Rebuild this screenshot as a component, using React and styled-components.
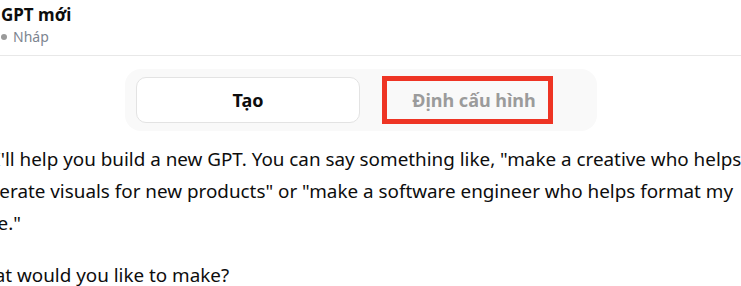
import React from "react";
import styled, { createGlobalStyle } from "styled-components";

const GlobalStyle = createGlobalStyle`
  body {
    margin: 0;
    background: #ffffff;
    font-family: "Noto Sans", "Open Sans", sans-serif;
    color: #0d0d0d;
    overflow: hidden;
  }
`;

const Page = styled.div`
  width: 741px;
  height: 286px;
  overflow: hidden;
`;

const Header = styled.header`
  height: 56px;
  padding: 3px 0 0 1px;
  box-sizing: border-box;
  border-bottom: 1px solid #e8e8e8;
`;

const Title = styled.h1`
  margin: 0;
  font-size: 17px;
  font-weight: 700;
  line-height: 24px;
  color: #0d0d0d;
`;

const Status = styled.div`
  display: flex;
  align-items: center;
  gap: 6px;
  font-size: 14px;
  line-height: 20px;
  color: #7d8590;
`;

const Dot = styled.span`
  width: 6px;
  height: 6px;
  border-radius: 50%;
  background: #9a9a9a;
`;

const TabsBar = styled.div`
  margin: 13px 0 0 125px;
  width: 472px;
  height: 62px;
  box-sizing: border-box;
  padding: 8px 11px;
  background: #f9f9f9;
  border-radius: 16px;
  display: grid;
  grid-template-columns: 1fr 1fr;
  gap: 2px;
`;

const Tab = styled.div`
  position: relative;
  display: flex;
  align-items: center;
  justify-content: center;
  border-radius: 10px;
  font-size: 18px;
  font-weight: 700;
  background: ${(p) => (p.$active ? "#ffffff" : "transparent")};
  border: 1px solid ${(p) => (p.$active ? "#e3e3e3" : "transparent")};
  color: ${(p) => (p.$active ? "#0d0d0d" : "#9b9b9b")};
`;

const Highlight = styled.span`
  position: absolute;
  left: 19px;
  top: -2px;
  width: 171px;
  height: 48px;
  box-sizing: border-box;
  border: 5px solid #ee3424;
`;

const Message = styled.div`
  margin: 12px 0 0 -34.5px;
  width: 788px;
  font-size: 18.85px;
  line-height: 32px;
`;

const Paragraph = styled.p`
  margin: 0 0 20px;
`;

export default function App() {
  return (
    <Page>
      <GlobalStyle />
      <Header>
        <Title>GPT mới</Title>
        <Status>
          <Dot />
          Nháp
        </Status>
      </Header>
      <TabsBar>
        <Tab $active>Tạo</Tab>
        <Tab>
          Định cấu hình
          <Highlight />
        </Tab>
      </TabsBar>
      <Message>
        <Paragraph>
          Hi! I'll help you build a new GPT. You can say something like, "make a creative who helps
          generate visuals for new products" or "make a software engineer who helps format my
          code."
        </Paragraph>
        <Paragraph>What would you like to make?</Paragraph>
      </Message>
    </Page>
  );
}
